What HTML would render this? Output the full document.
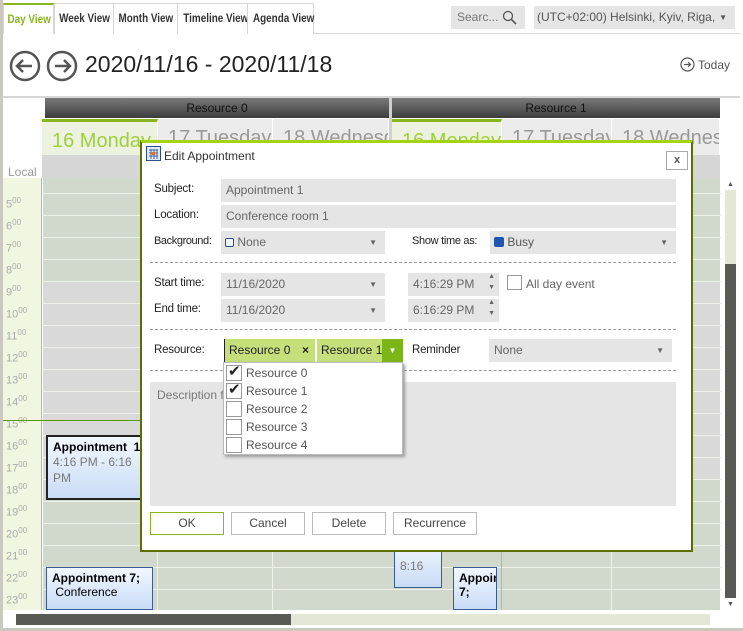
<!DOCTYPE html>
<html><head><meta charset="utf-8"><style>
*{box-sizing:border-box;margin:0;padding:0}
body{width:743px;height:631px;overflow:hidden;background:#fff;font-family:"Liberation Sans",sans-serif;font-size:12px;color:#333;position:relative}
div{white-space:nowrap}
.a{position:absolute}
.tab{position:absolute;top:3px;height:31px;border:1px solid #d6d6d6;border-bottom:none;font-weight:bold;font-size:11.5px;color:#333;text-align:center;line-height:30px;background:#fff}
.tab span{display:inline-block;transform:scaleX(.86)}
.inp{position:absolute;background:#e5e5e5;color:#666;font-size:12px;line-height:23px;padding-left:5px;height:23px}
.arr{position:absolute;right:8px;top:0;font-size:8px;color:#666}
.lbl{position:absolute;font-size:11.5px;color:#222;letter-spacing:-0.2px}
.dash{position:absolute;left:150px;width:526px;border-top:1px dashed #999;height:0}
.btn{position:absolute;top:512px;height:23px;border:1px solid #bbb;background:#fff;text-align:center;line-height:21px;color:#444}
.row{position:absolute;left:42px;width:680px;height:22px;border-bottom:1px solid #eef0ea}
.tl{position:absolute;left:6px;font-size:11px;color:#aaa}
.tl sup{font-size:8px}
.day{position:absolute;top:119px;height:36px;background:#ebebeb;border-right:1px solid #fff;font-size:20px;color:#999;line-height:38px;padding-left:10px;overflow:hidden;white-space:nowrap}
.appt{position:absolute;background:linear-gradient(#f2f7ff,#c9dcf6);border:1px solid #3a5c94;font-size:12px;padding:3px 5px;color:#000;white-space:normal}
.appt div{white-space:normal}
.cb{position:absolute;left:226px;width:16px;height:16px;border:1px solid #999;background:#fff}
.it{position:absolute;left:246px;color:#555}
</style></head><body>
<div class="a" style="left:0;top:0;width:3px;height:631px;background:#c9c9c0"></div>
<div class="a" style="left:0;top:628px;width:743px;height:3px;background:#c9c9c0"></div>
<!-- tabs -->
<div class="a" style="left:3px;top:33px;width:737px;height:1px;background:#d6d6d6"></div>
<div class="tab" style="left:3px;width:51px;color:#8ab523;border-top:2px solid #8ab523;border-bottom:1px solid #fff"><span>Day View</span></div>
<div class="tab" style="left:54px;width:60px"><span>Week View</span></div>
<div class="tab" style="left:113px;width:65px"><span>Month View</span></div>
<div class="tab" style="left:177px;width:71px"><span>Timeline View</span></div>
<div class="tab" style="left:247px;width:67px"><span>Agenda View</span></div>
<div class="a" style="left:451px;top:6px;width:74px;height:23px;background:#e5e5e5;color:#777;line-height:22px;padding-left:6px">Searc...
<svg class="a" style="left:51px;top:4px" width="15" height="15" viewBox="0 0 15 15"><circle cx="6" cy="6" r="4.5" fill="none" stroke="#555" stroke-width="1.3"/><path d="M9.3 9.3L14 14" stroke="#555" stroke-width="1.6"/></svg></div>
<div class="a" style="left:534px;top:6px;width:201px;height:23px;background:#e5e5e5;color:#555;line-height:23px;padding-left:3px">(UTC+02:00) Helsinki, Kyiv, Riga,<span class="a" style="right:8px;font-size:8px">▼</span></div>
<!-- toolbar -->
<svg class="a" style="left:9px;top:50px" width="70" height="32" viewBox="0 0 70 32"><circle cx="16" cy="16" r="14" fill="none" stroke="#555" stroke-width="2.5"/><path d="M23 16H9M14 10L8 16L14 22" fill="none" stroke="#555" stroke-width="2.5"/><circle cx="53" cy="16" r="14" fill="none" stroke="#555" stroke-width="2.5"/><path d="M46 16H60M55 10L61 16L55 22" fill="none" stroke="#555" stroke-width="2.5"/></svg>
<div class="a" style="left:85px;top:51px;font-size:23px;color:#222">2020/11/16 - 2020/11/18</div>
<svg class="a" style="left:680px;top:57px" width="15" height="15"><circle cx="7.5" cy="7.5" r="6.5" fill="none" stroke="#555" stroke-width="1.2"/><path d="M4 7.5H10.5M8 5L10.5 7.5L8 10" fill="none" stroke="#555" stroke-width="1.2"/></svg>
<div class="a" style="left:698px;top:58px;color:#555">Today</div>
<div class="a" style="left:3px;top:96px;width:737px;height:2px;background:#d6d6d6"></div>
<!-- grid -->
<div class="a" style="left:45px;top:98px;width:344px;height:20px;background:linear-gradient(#7a7a7a,#3c3c3c);color:#111;text-align:center;line-height:20px">Resource 0</div>
<div class="a" style="left:392px;top:98px;width:328px;height:20px;background:linear-gradient(#7a7a7a,#3c3c3c);color:#111;text-align:center;line-height:20px">Resource 1</div>
<div class="a" style="left:389px;top:98px;width:3px;height:512px;background:#d0d0d0"></div>
<div class="day" style="left:42px;width:116px;color:#9fcf3c;border-top:3px solid #8ab523;background:#edf2e0">16 Monday</div>
<div class="day" style="left:158px;width:115px">17 Tuesday</div>
<div class="day" style="left:273px;width:116px">18 Wednesday</div>
<div class="day" style="left:392px;width:110px;color:#9fcf3c;border-top:3px solid #8ab523;background:#edf2e0">16 Monday</div>
<div class="day" style="left:502px;width:110px">17 Tuesday</div>
<div class="day" style="left:612px;width:108px">18 Wednesday</div>
<div class="a" style="left:42px;top:155px;width:678px;height:23px;background:#d6d6d6"></div>
<div class="a" style="left:3px;top:178px;width:39px;height:432px;background:#f1f6e1;border-right:1px solid #a6d04a"></div>
<div class="a" style="left:8px;top:165px;color:#999">Local</div>
<div class="a" style="left:43px;top:178px;width:677px;height:104px;background:#d1d9cd"></div>
<div class="a" style="left:43px;top:282px;width:677px;height:198px;background:#d9d9d9"></div>
<div class="a" style="left:43px;top:480px;width:677px;height:130px;background:#d1d9cd"></div>
<div class="row" style="top:172px"></div><div class="row" style="top:194px"></div><div class="row" style="top:216px"></div><div class="row" style="top:238px"></div><div class="row" style="top:260px"></div><div class="row" style="top:282px"></div><div class="row" style="top:304px"></div><div class="row" style="top:326px"></div><div class="row" style="top:348px"></div><div class="row" style="top:370px"></div><div class="row" style="top:392px"></div><div class="row" style="top:414px"></div><div class="row" style="top:436px"></div><div class="row" style="top:458px"></div><div class="row" style="top:480px"></div><div class="row" style="top:502px"></div><div class="row" style="top:524px"></div><div class="row" style="top:546px"></div><div class="row" style="top:568px"></div>
<div class="a" style="left:157px;top:178px;width:1px;height:432px;background:#eef0ea"></div>
<div class="a" style="left:272px;top:178px;width:1px;height:432px;background:#eef0ea"></div>
<div class="a" style="left:501px;top:178px;width:1px;height:432px;background:#a6d04a"></div>
<div class="a" style="left:611px;top:178px;width:1px;height:432px;background:#eef0ea"></div>
<div class="tl" style="top:196px">5<sup>00</sup></div><div class="tl" style="top:218px">6<sup>00</sup></div><div class="tl" style="top:240px">7<sup>00</sup></div><div class="tl" style="top:262px">8<sup>00</sup></div><div class="tl" style="top:284px">9<sup>00</sup></div><div class="tl" style="top:306px">10<sup>00</sup></div><div class="tl" style="top:328px">11<sup>00</sup></div><div class="tl" style="top:350px">12<sup>00</sup></div><div class="tl" style="top:372px">13<sup>00</sup></div><div class="tl" style="top:394px">14<sup>00</sup></div><div class="tl" style="top:416px">15<sup>00</sup></div><div class="tl" style="top:438px">16<sup>00</sup></div><div class="tl" style="top:460px">17<sup>00</sup></div><div class="tl" style="top:482px">18<sup>00</sup></div><div class="tl" style="top:504px">19<sup>00</sup></div><div class="tl" style="top:526px">20<sup>00</sup></div><div class="tl" style="top:548px">21<sup>00</sup></div><div class="tl" style="top:570px">22<sup>00</sup></div><div class="tl" style="top:592px">23<sup>00</sup></div>
<div class="a" style="left:3px;top:420px;width:150px;height:1px;background:#5a9a00"></div>
<div class="appt" style="left:46px;top:435px;width:112px;height:65px;border:2px solid #222;font-weight:bold">Appointment&nbsp; 1<div style="font-weight:normal;color:#777;line-height:16px">4:16 PM - 6:16 PM</div></div>
<div class="appt" style="left:46px;top:567px;width:107px;height:43px;font-weight:bold">Appointment 7;<div style="font-weight:normal">&nbsp;Conference</div></div>
<div class="appt" style="left:394px;top:540px;width:48px;height:48px;color:#777;padding-top:18px">8:16</div>
<div class="appt" style="left:453px;top:567px;width:44px;height:43px;font-weight:bold;overflow:hidden">Appoin 7;</div>
<!-- scrollbars -->
<div class="a" style="left:722px;top:178px;width:18px;height:432px;background:#fff"></div>
<div class="a" style="left:725px;top:190px;width:11px;height:408px;background:#e4e6d6"></div>
<div class="a" style="left:725px;top:264px;width:11px;height:334px;background:#595a54"></div>
<div class="a" style="left:727px;top:181px;font-size:7px;color:#555">▲</div>
<div class="a" style="left:727px;top:601px;font-size:7px;color:#555">▼</div>
<div class="a" style="left:3px;top:610px;width:719px;height:18px;background:#fff"></div>
<div class="a" style="left:16px;top:614px;width:694px;height:11px;background:#e4e6d6"></div>
<div class="a" style="left:16px;top:614px;width:275px;height:11px;background:#595a54"></div>
<!-- dialog -->
<div class="a" style="left:140px;top:140px;width:553px;height:412px;background:#fff;border:2px solid #5b7000;border-top:3px solid #a3d312"></div>
<svg class="a" style="left:146px;top:146px" width="15" height="15"><rect x="0.5" y="0.5" width="14" height="14" fill="#dfe9f6" stroke="#2b4e8c"/><path d="M3 4H12M3 7H12M3 10H12M5 3V13M8 3V13M11 3V13" stroke="#2b4e8c" stroke-width=".8"/><rect x="6" y="6" width="3" height="3" fill="#e8711a"/></svg>
<div class="a" style="left:164px;top:149px;color:#333">Edit Appointment</div>
<div class="a" style="left:666px;top:151px;width:22px;height:19px;border:1px solid #aaa;text-align:center;line-height:17px;font-size:11px;font-weight:bold;color:#555">x</div>
<div class="lbl" style="left:154px;top:183px">Subject:</div>
<div class="inp" style="left:221px;top:179px;width:455px">Appointment 1</div>
<div class="lbl" style="left:154px;top:209px">Location:</div>
<div class="inp" style="left:221px;top:205px;width:455px">Conference room 1</div>
<div class="lbl" style="left:154px;top:235px;font-size:11px;letter-spacing:-0.4px">Background:</div>
<div class="inp" style="left:221px;top:231px;width:164px;padding-left:4px"><span style="display:inline-block;width:9px;height:9px;border:1px solid #2b4e8c;background:#eef3fb;border-radius:2px;vertical-align:-1px"></span> None<span class="arr">▼</span></div>
<div class="lbl" style="left:412px;top:235px;font-size:11px;letter-spacing:-0.3px">Show time as:</div>
<div class="inp" style="left:490px;top:231px;width:186px;padding-left:4px;color:#555"><span style="display:inline-block;width:10px;height:10px;background:#1f56b0;border-radius:2px;vertical-align:-1px"></span> Busy<span class="arr">▼</span></div>
<div class="dash" style="top:262px"></div>
<div class="lbl" style="left:154px;top:277px">Start time:</div>
<div class="inp" style="left:221px;top:273px;width:164px">11/16/2020<span class="arr">▼</span></div>
<div class="inp" style="left:408px;top:273px;width:91px">4:16:29 PM<span class="a" style="right:4px;top:-2px;font-size:7px;line-height:11px">▲<br>▼</span></div>
<div class="a" style="left:507px;top:275px;width:15px;height:15px;border:1px solid #999"></div>
<div class="a" style="left:526px;top:277px;color:#666">All day event</div>
<div class="lbl" style="left:154px;top:303px">End time:</div>
<div class="inp" style="left:221px;top:299px;width:164px">11/16/2020<span class="arr">▼</span></div>
<div class="inp" style="left:408px;top:299px;width:91px">6:16:29 PM<span class="a" style="right:4px;top:-2px;font-size:7px;line-height:11px">▲<br>▼</span></div>
<div class="dash" style="top:329px"></div>
<div class="lbl" style="left:154px;top:344px">Resource:</div>
<div class="a" style="left:224px;top:339px;width:91px;height:23px;background:#c5e07a;border-left:1px solid #222;line-height:23px;padding-left:4px;color:#222">Resource 0<span class="a" style="right:6px;font-weight:bold">×</span></div>
<div class="a" style="left:317px;top:339px;width:65px;height:23px;background:#c5e07a;line-height:23px;padding-left:4px;color:#222;overflow:hidden">Resource 1</div>
<div class="a" style="left:382px;top:339px;width:21px;height:23px;background:#7cb518;color:#fff;font-size:8px;text-align:center;line-height:23px">▼</div>
<div class="lbl" style="left:412px;top:344px">Reminder</div>
<div class="inp" style="left:489px;top:339px;width:183px">None<span class="arr">▼</span></div>
<div class="dash" style="top:370px"></div>
<div class="a" style="left:150px;top:382px;width:526px;height:124px;background:#e5e5e5;color:#777;padding:6px 7px">Description f</div>
<div class="a" style="left:223px;top:362px;width:180px;height:93px;background:#fff;border:1px solid #bbb;box-shadow:2px 2px 3px #999"></div>
<div class="cb" style="top:365px"></div><div class="a" style="left:228px;top:362px;font-size:15px;color:#222">✔</div><div class="it" style="top:366px">Resource 0</div>
<div class="cb" style="top:383px"></div><div class="a" style="left:228px;top:380px;font-size:15px;color:#222">✔</div><div class="it" style="top:384px">Resource 1</div>
<div class="cb" style="top:401px"></div><div class="it" style="top:402px">Resource 2</div>
<div class="cb" style="top:419px"></div><div class="it" style="top:420px">Resource 3</div>
<div class="cb" style="top:437px"></div><div class="it" style="top:438px">Resource 4</div>
<div class="btn" style="left:150px;width:74px;border-color:#8ab523">OK</div>
<div class="btn" style="left:231px;width:74px">Cancel</div>
<div class="btn" style="left:312px;width:74px">Delete</div>
<div class="btn" style="left:393px;width:84px">Recurrence</div>
</body></html>
